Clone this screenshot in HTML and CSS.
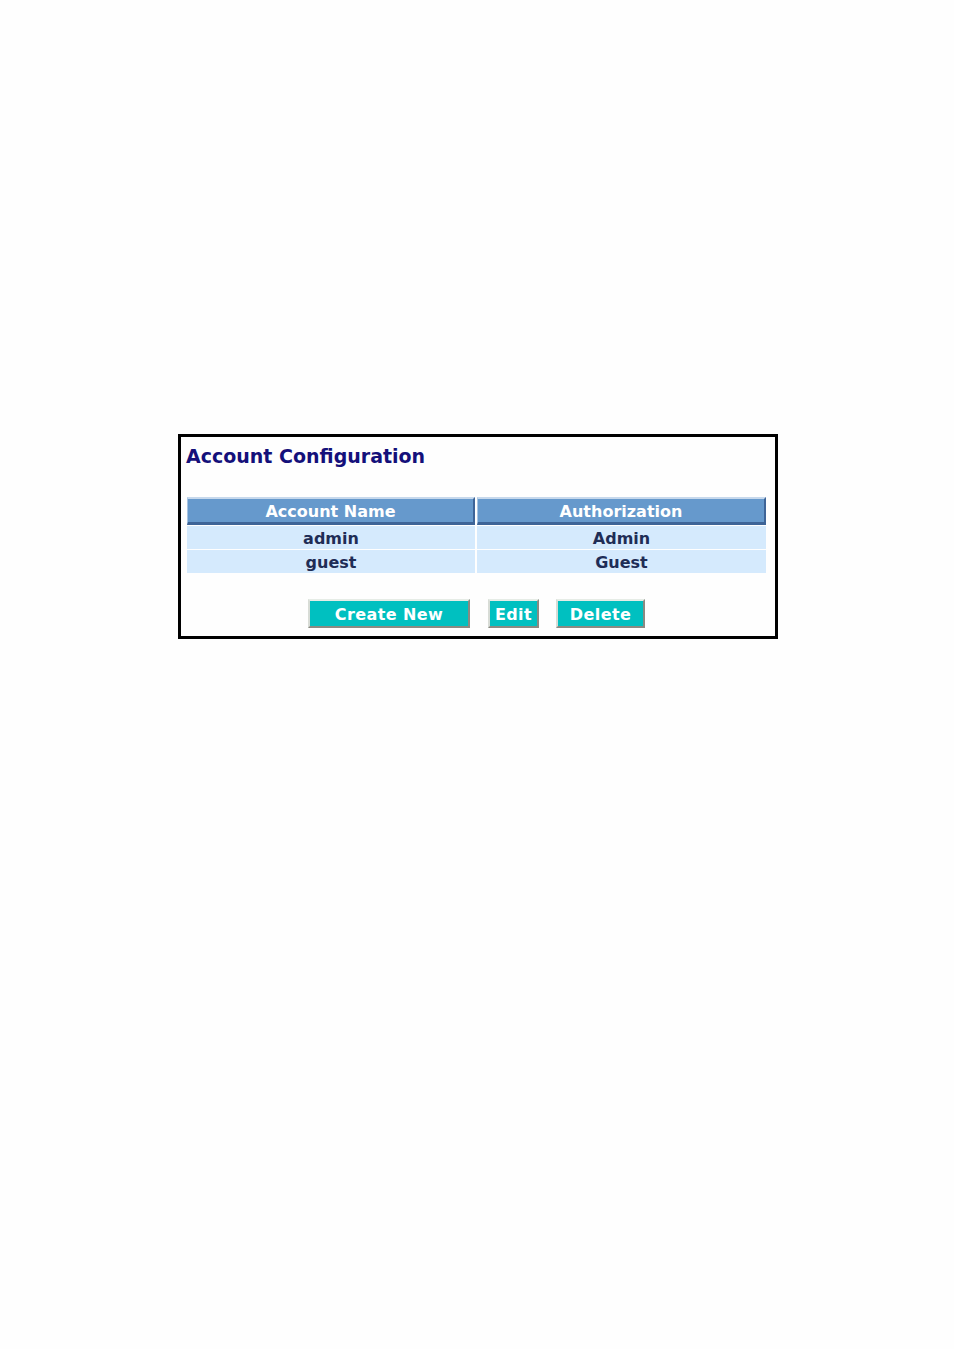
FILE: index.html
```html
<!DOCTYPE html>
<html>
<head>
<meta charset="utf-8">
<link rel="stylesheet" href="styles.css">
</head>
<body>
<div class="page">
  <div class="box">
    <h1 class="title">Account Configuration</h1>
    <div class="table">
      <div class="th">Account Name</div>
      <div class="th">Authorization</div>
      <div class="td">admin</div>
      <div class="td">Admin</div>
      <div class="td">guest</div>
      <div class="td">Guest</div>
    </div>
    <div class="buttons">
      <button class="btn btn-create">Create New</button>
      <button class="btn btn-edit">Edit</button>
      <button class="btn btn-delete">Delete</button>
    </div>
  </div>
</div>
</body>
</html>
```

FILE: styles.css
```css
html, body {
  margin: 0;
  padding: 0;
  background: #fefefe;
}
.page {
  padding-top: 434px;
  padding-left: 178px;
  height: 915px;
}
.box {
  width: 594px;
  height: 199px;
  border: 3px solid #000;
  background: #fefefe;
  display: flex;
  flex-direction: column;
}
.title {
  margin: 0;
  padding: 8px 0 0 5px;
  height: 60px;
  box-sizing: border-box;
  font-family: "DejaVu Sans", Verdana, sans-serif;
  font-weight: bold;
  font-size: 19px;
  letter-spacing: 0;
  color: #14107a;
}
.table {
  margin-left: 6px;
  width: 579px;
  display: grid;
  grid-template-columns: 288px 289px;
  grid-template-rows: 28px 23px 23px;
  column-gap: 2px;
  row-gap: 1px;
}
.th {
  background: #6699cc;
  border-top: 2px solid #c6d8ec;
  border-left: 1px solid #a8c4e2;
  border-bottom: 3px solid #3e6497;
  border-right: 2px solid #3e6497;
  box-sizing: border-box;
  padding-top: 2px;
  color: #fff;
  font-family: "DejaVu Sans", Verdana, sans-serif;
  font-weight: bold;
  font-size: 16px;
  letter-spacing: 0;
  display: flex;
  align-items: center;
  justify-content: center;
}
.td {
  background: #d5eafd;
  color: #1f2d56;
  box-sizing: border-box;
  padding-top: 2px;
  font-family: "DejaVu Sans", Verdana, sans-serif;
  font-weight: bold;
  font-size: 16px;
  letter-spacing: 0;
  display: flex;
  align-items: center;
  justify-content: center;
}
.buttons {
  margin-top: 26px;
  margin-left: 6px;
  width: 579px;
  display: flex;
  justify-content: center;
  gap: 17px;
}
.btn {
  height: 29px;
  margin: 0;
  padding: 2px 0 0 0;
  box-sizing: border-box;
  background: #00c0c0;
  color: #fff;
  font-family: "DejaVu Sans", Verdana, sans-serif;
  font-weight: bold;
  font-size: 16px;
  letter-spacing: 0.4px;
  border-top: 2px solid #e6ece6;
  border-left: 2px solid #d8dcd6;
  border-right: 2px solid #8a8a82;
  border-bottom: 2px solid #8a8a82;
}
.btn-create { width: 162px; margin-right: 1px; }
.btn-edit { width: 51px; }
.btn-delete { width: 89px; }
```
